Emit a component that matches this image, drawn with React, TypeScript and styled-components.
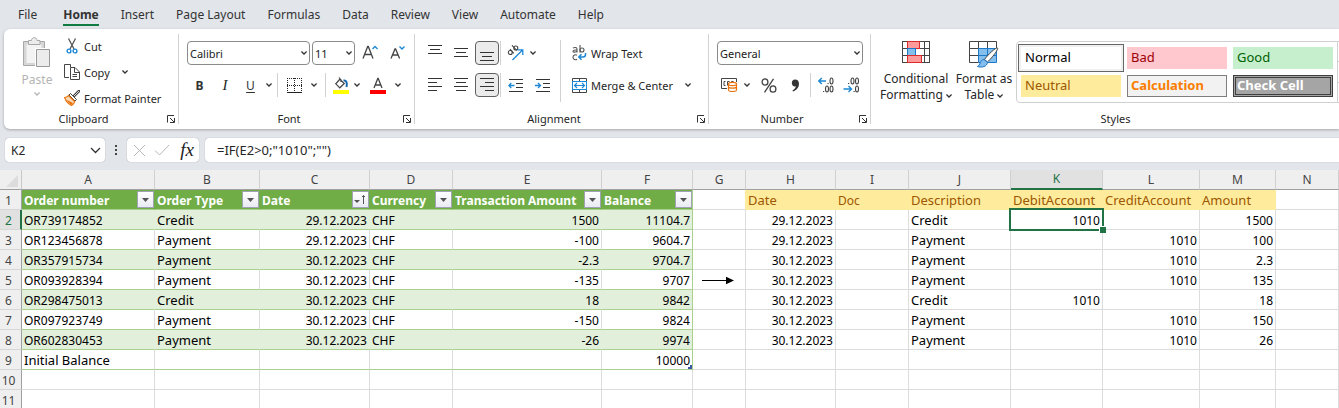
import React from "react";
import styled, { createGlobalStyle, css } from "styled-components";

const uiFont = `"Noto Sans", "Open Sans", "Liberation Sans", sans-serif`;
const green = "#217346";

const GlobalStyle = createGlobalStyle`
  *, *::before, *::after { box-sizing: border-box; }
  body { margin: 0; background: #fff; font-family: ${uiFont}; font-size: 12px; color: #262626; }
  button, input, select { font: inherit; color: inherit; margin: 0; }
`;

const Page = styled.div`
  display: flex;
  flex-direction: column;
  height: 100vh;
  overflow: hidden;
  background: #e2e5ea;
`;

/* ---------- tabs ---------- */
const Tabs = styled.nav`
  display: flex;
  flex: none;
  height: 29px;
  padding: 0 18px;
  gap: 22px;
`;
const Tab = styled.a<{ $active?: boolean }>`
  display: block;
  height: 26px;
  padding-top: 6px;
  line-height: 17px;
  text-decoration: none;
  color: #333;
  white-space: nowrap;
  ${(p) =>
    p.$active &&
    css`
      margin-left: 4px;
      font-weight: 700;
      border-bottom: 2px solid #107c41;
    `}
`;

/* ---------- ribbon ---------- */
const Ribbon = styled.section`
  display: flex;
  flex: none;
  height: 100px;
  margin-left: 4px;
  padding: 4px 0 2px;
  background: #fff;
  border-radius: 6px 0 0 6px;
  box-shadow: 0 1px 3px rgba(0, 0, 0, 0.28);
`;
const Group = styled.div<{ $width?: number }>`
  display: flex;
  flex-direction: column;
  flex: ${(p) => (p.$width ? "none" : "1 0 auto")};
  width: ${(p) => (p.$width ? `${p.$width}px` : "auto")};
  ${(p) =>
    p.$width &&
    css`
      background: linear-gradient(#d2d2d2, #d2d2d2) right 1px / 1px 90px no-repeat;
    `}
`;
const GroupBody = styled.div<{ $pad?: number; $gap?: number }>`
  display: flex;
  height: 78px;
  padding-left: ${(p) => p.$pad ?? 8}px;
  gap: ${(p) => p.$gap ?? 0}px;
`;
const GroupFooter = styled.div<{ $indent?: number }>`
  display: flex;
  align-items: center;
  height: 16px;
  padding: 0 4px 0 ${(p) => p.$indent ?? 0}px;
`;
const GroupName = styled.span`
  flex: 1;
  padding-right: 4px;
  font-size: 11px;
  line-height: 16px;
  text-align: center;
`;
const IconButton = styled.button<{ $w?: number; $pressed?: boolean }>`
  display: inline-flex;
  align-items: center;
  justify-content: center;
  flex: none;
  width: ${(p) => p.$w ?? 24}px;
  height: 24px;
  padding: 0;
  border: 1px solid ${(p) => (p.$pressed ? "#616161" : "transparent")};
  border-radius: 4px;
  background: ${(p) => (p.$pressed ? "#ebebeb" : "transparent")};
`;
const Launcher = styled(IconButton)`
  width: 8px;
  height: 16px;
  border: 0;
`;
const Stack = styled.div`
  display: flex;
  flex-direction: column;
`;
const Rows = styled(Stack)`
  padding-top: 4px;
`;
const ToolRow = styled.div<{ $gap?: number }>`
  display: flex;
  align-items: center;
  height: 32px;
  gap: ${(p) => p.$gap ?? 0}px;
`;
const Divider = styled.span<{ $space?: number }>`
  flex: none;
  width: 1px;
  height: 24px;
  margin: 0 ${(p) => p.$space ?? 0}px;
  background: #d2d2d2;
`;
const TallDivider = styled(Divider)`
  height: 62px;
  margin: 7px 10px 0 5px;
`;
const TextButton = styled.button<{ $h?: number }>`
  display: flex;
  align-items: center;
  height: ${(p) => p.$h ?? 26}px;
  padding: 0;
  gap: 4px;
  border: 0;
  background: none;
  font-size: 11px;
  white-space: nowrap;
`;
const IconSlot = styled.span`
  display: flex;
  justify-content: center;
  width: 16px;
`;
const MoreSlot = styled.span`
  display: flex;
  margin-left: 8px;
`;
const BigButton = styled.button<{ $w: number; $muted?: boolean }>`
  display: flex;
  flex-direction: column;
  align-items: center;
  width: ${(p) => p.$w}px;
  padding: ${(p) => (p.$muted ? 4 : 8)}px 0 0;
  gap: ${(p) => (p.$muted ? 4 : 2)}px;
  border: 0;
  background: none;
  color: ${(p) => (p.$muted ? "#b4b4b4" : "#262626")};
  line-height: 16px;
  white-space: nowrap;
  span svg {
    vertical-align: middle;
  }
`;
const BigIcon = styled.div`
  height: 28px;
  line-height: 0;
`;
const Drop = styled.div<{ $w: number }>`
  position: relative;
  flex: none;
  width: ${(p) => p.$w}px;
  height: 24px;
`;
const Select = styled.select`
  appearance: none;
  width: 100%;
  height: 24px;
  padding: 0 2px;
  border: 1px solid #8a8a8a;
  border-radius: 4px;
  background: #fff;
  color: #222;
  font-size: 11px;
`;
const DropMark = styled.span<{ $right?: number }>`
  position: absolute;
  top: 0;
  right: ${(p) => p.$right ?? 3}px;
  display: flex;
  align-items: center;
  height: 100%;
  pointer-events: none;
`;
const Italic = styled.i`
  font-family: "Liberation Serif", serif;
  font-size: 15px;
`;
const Glyph = styled.span<{ $bold?: boolean }>`
  font-weight: ${(p) => (p.$bold ? 700 : 400)};
  text-decoration: ${(p) => (p.$bold ? "none" : "underline")};
  text-underline-offset: 2px;
  color: #333;
`;

/* ---------- style gallery ---------- */
const Gallery = styled.div`
  display: grid;
  grid-template-columns: repeat(3, 100px);
  grid-auto-rows: 22px;
  gap: 6px;
  flex: none;
  height: 62px;
  margin: 8px 0 0 1px;
  padding: 5px 4px;
  border: 1px solid #d0d0d0;
  border-radius: 4px 0 0 4px;
`;
const Swatch = styled.button<{ $bg: string; $fg: string; $kind?: "selected" | "calc" | "check" }>`
  padding: 0 4px 2px;
  border: 0;
  background: ${(p) => p.$bg};
  color: ${(p) => p.$fg};
  font-size: 13px;
  line-height: 20px;
  text-align: left;
  ${(p) =>
    p.$kind === "selected" &&
    css`
      box-shadow: 0 0 0 2px #f0f0f0, 0 0 0 3px #666;
    `}
  ${(p) =>
    p.$kind === "calc" &&
    css`
      padding: 0 3px 2px;
      border: 1px solid #7f7f7f;
      font-weight: 700;
      line-height: 18px;
    `}
  ${(p) =>
    p.$kind === "check" &&
    css`
      padding: 0 1px 2px;
      border: 3px double #3f3f3f;
      font-weight: 700;
      line-height: 14px;
    `}
`;
const Scroller = styled.div`
  display: flex;
  flex-direction: column;
  flex: none;
  width: 18px;
  margin-top: 8px;
  height: 62px;
  border: 1px solid #d0d0d0;
  border-left: 0;
`;
const ScrollButton = styled.button`
  flex: 1;
  padding: 0;
  border: 0;
  background: none;
  & + & {
    border-top: 1px solid #d0d0d0;
  }
`;

/* ---------- formula bar ---------- */
const FormulaBar = styled.div`
  display: flex;
  align-items: center;
  flex: none;
  height: 41px;
  padding-left: 5px;
  padding-top: 1px;
`;
const NameBox = styled.div`
  position: relative;
  width: 100px;
  height: 24px;
`;
const Field = styled.input<{ $pad: number }>`
  width: 100%;
  height: 24px;
  padding: 0 ${(p) => p.$pad}px;
  border: 0;
  border-radius: 4px;
  background: #fff;
  box-shadow: 0 0 1px rgba(0, 0, 0, 0.4);
`;
const FormulaField = styled(Field)`
  flex: 1;
  border-radius: 4px 0 0 4px;
  font-size: 13px;
`;
const DotsSlot = styled.span`
  display: flex;
  justify-content: center;
  width: 22px;
`;
const FormulaTools = styled.div`
  display: flex;
  align-items: center;
  justify-content: space-between;
  width: 72px;
  height: 24px;
  margin-right: 6px;
  padding: 0 2px 0 4px;
  border-radius: 4px;
  background: #fff;
  box-shadow: 0 0 1px rgba(0, 0, 0, 0.4);
`;
const FxMark = styled.i`
  font-family: "Liberation Serif", serif;
  font-size: 19px;
  line-height: 20px;
  color: #222;
`;

/* ---------- sheet ---------- */
const SheetArea = styled.main`
  flex: 1;
  min-height: 0;
  overflow: hidden;
  background: #fff;
`;
const Sheet = styled.table`
  width: 100%;
  border-collapse: separate;
  border-spacing: 0;
  table-layout: fixed;
  font-size: 12px;
  line-height: 17px;
  color: #000;
`;
const Corner = styled.td`
  height: 20px;
  padding: 0 3px 2px 0;
  background: #efefef;
  border-right: 1px solid #c8c8c8;
  border-bottom: 1px solid #a0a0a0;
  line-height: 0;
  text-align: right;
  vertical-align: bottom;
`;
const ColHead = styled.th<{ $on?: boolean }>`
  height: 20px;
  padding: 0;
  background: ${(p) => (p.$on ? "#e1e1e1" : "#efefef")};
  border-right: 1px solid #d0d0d0;
  border-bottom: ${(p) => (p.$on ? `2px solid ${green}` : "1px solid #a0a0a0")};
  color: ${(p) => (p.$on ? green : "#444")};
  font-weight: 400;
  line-height: 18px;
`;
const RowHead = styled.th<{ $on?: boolean }>`
  height: 20px;
  padding: 2px ${(p) => (p.$on ? 3 : 4)}px 0 0;
  background: ${(p) => (p.$on ? "#e1e1e1" : "#efefef")};
  border-right: ${(p) => (p.$on ? `2px solid ${green}` : "1px solid #a0a0a0")};
  border-bottom: 1px solid #d6d6d6;
  color: ${(p) => (p.$on ? green : "#444")};
  font-weight: 400;
`;

type Zone = "plain" | "head" | "band" | "row" | "yellow";
const zoneFill: Record<Zone, string> = {
  plain: "#fff",
  head: "#70ad47",
  band: "#e2efda",
  row: "#fff",
  yellow: "#ffeb9c",
};
const Cell = styled.td<{ $zone: Zone; $right?: boolean; $wordy?: boolean; $edge?: string }>`
  position: relative;
  height: 20px;
  padding: ${(p) => (p.$zone === "head" ? 0 : 2)}px 2px 0;
  background: ${(p) => zoneFill[p.$zone]};
  border-right: 1px solid
    ${(p) => p.$edge ?? (p.$zone === "plain" || p.$zone === "row" ? "#dcdcdc" : zoneFill[p.$zone])};
  border-bottom: 1px solid
    ${(p) => (p.$zone === "plain" ? "#dcdcdc" : p.$zone === "yellow" ? "#ffeb9c" : "#a9d08e")};
  color: ${(p) => (p.$zone === "head" ? "#fff" : p.$zone === "yellow" ? "#9c5700" : "#000")};
  font-size: ${(p) => (p.$wordy ? 13 : 12)}px;
  font-weight: ${(p) => (p.$zone === "head" ? 700 : 400)};
  text-align: ${(p) => (p.$right ? "right" : "left")};
  white-space: nowrap;
`;
const HeadContent = styled.div`
  display: flex;
  align-items: center;
  justify-content: space-between;
  height: 19px;
  margin-right: -2px;
`;
const HeadText = styled.span`
  padding-top: 2px;
`;
const FilterButton = styled.button`
  display: flex;
  align-items: center;
  justify-content: center;
  flex: none;
  width: 17px;
  height: 17px;
  padding: 0;
  border: 1px solid #9fa3b3;
  background: linear-gradient(#fff, #e9ebf2);
`;
const Selection = styled.span`
  position: absolute;
  inset: -2px;
  z-index: 1;
  border: 2px solid ${green};
  &::after {
    content: "";
    position: absolute;
    right: -4px;
    bottom: -4px;
    width: 7px;
    height: 7px;
    border: solid #fff;
    border-width: 1px 0 0 1px;
    background: ${green};
  }
`;
const TableCorner = styled.span`
  position: absolute;
  right: 0;
  bottom: 0;
  width: 4px;
  height: 4px;
  background: #3f55a5;
  clip-path: polygon(50% 0, 100% 0, 100% 100%, 0 100%, 0 50%, 50% 50%);
`;
const ArrowMark = styled.svg`
  display: block;
  margin-left: 6px;
`;

/* ---------- icons ---------- */
const Chevron = ({ big, color = "#333" }: { big?: boolean; color?: string }) =>
  big ? (
    <svg width="11" height="7" viewBox="0 0 11 7" fill="none" stroke={color} strokeWidth="1.3">
      <path d="M1 1l4.5 4.5L10 1" />
    </svg>
  ) : (
    <svg width="6" height="4" viewBox="0 0 6 4" fill="none" stroke={color} strokeWidth="1.3">
      <path d="M.4.6L3 3 5.6.6" />
    </svg>
  );

const LauncherIcon = () => (
  <svg width="8" height="8" viewBox="0 0 8 8" fill="none" stroke="#333">
    <path d="M.5 7.5V.5H7M3 3l4 4M7.5 3v4.500H3" />
  </svg>
);

const PasteIcon = () => (
  <svg width="28" height="31" viewBox="0 0 28 31" fill="#ececec" stroke="#a8a8a8">
    <path d="M.5 4.500H21.500V28.500H.5Z" fill="#d6d6d6" />
    <path d="M3.500 7.500H18.500V26H3.500Z" fill="#f3f3f3" stroke="none" />
    <path d="M5.500 7.500V3.500H8.500C8.500-.3 14-.3 14 3.500H17V7.500Z" />
    <path d="M13.500 12.500H26.500V29.500H13.500Z" fill="#efefef" stroke="#fff" strokeWidth="3" />
    <path d="M13.500 12.500H26.500V29.500H13.500Z" stroke="#999" />
  </svg>
);
const CutIcon = () => (
  <svg width="12" height="16" viewBox="0 0 12 16" fill="none">
    <path d="M2.500 .5L8 11M9.500.5L4 11" stroke="#555" strokeWidth="1.3" />
    <circle cx="3" cy="13" r="1.900" stroke="#1e88d6" strokeWidth="1.4" />
    <circle cx="9" cy="13" r="1.900" stroke="#1e88d6" strokeWidth="1.4" />
  </svg>
);
const CopyIcon = () => (
  <svg width="16" height="16" viewBox="0 0 16 16" fill="#fff" stroke="#444">
    <path d="M5 13.500H.5V.5H6.500V3" />
    <path d="M6.500 3.500H11L15.500 8V15.500H6.500Z" />
    <path d="M10.500 3.500V8.500H15M8.500 10.500H13M8.500 12.500H13" fill="none" />
  </svg>
);
const PainterIcon = () => (
  <svg width="16" height="16" viewBox="0 0 16 16" fill="none">
    <path d="M15 1L10 6" stroke="#444" strokeWidth="2.600" strokeLinecap="round" />
    <path d="M15 1L10 6" stroke="#fff" strokeWidth=".8" />
    <path d="M6.500 3.500L12.500 9.500L11 11L5 5Z" fill="#fff" stroke="#444" />
    <path d="M4.500 5.500C3.500 7 2 7.500.5 7.500C2 11.500 4 14 7.500 15.500C9 14.500 10.500 13 10.700 11.500Z" fill="#fbd9b5" stroke="#e8720c" strokeWidth="1.200" />
    <path d="M2 9.500L9 13L7 15Z" fill="#e8720c" />
  </svg>
);
const GrowFont = ({ down }: { down?: boolean }) => (
  <svg width="17" height="16" viewBox="0 0 17 16" fill="none">
    {down ? (
      <>
        <path d="M1 13.500L5 4H5.600L9.600 13.500M2.600 10H8" stroke="#444" strokeWidth="1.300" />
        <path d="M9.500 1.500L12 4L14.500 1.500" stroke="#1e88d6" strokeWidth="1.400" />
      </>
    ) : (
      <>
        <path d="M1 13.500L5.700 1.500H6.300L11 13.500M2.800 9.500H9.200" stroke="#444" strokeWidth="1.300" />
        <path d="M10.500 4L13 1.500L15.500 4" stroke="#1e88d6" strokeWidth="1.400" />
      </>
    )}
  </svg>
);
const BordersIcon = () => (
  <svg width="15" height="15" viewBox="0 0 15 15" stroke="#222" fill="none">
    <path d="M0 .5H15M0 7.500H15M.5 0V13M7.500 0V13M14.500 0V13" strokeDasharray="1 1" />
    <path d="M0 14.500H15" />
  </svg>
);
const FillIcon = () => (
  <svg width="16" height="17" viewBox="0 0 16 17" fill="none">
    <path d="M7.500 1.500L2.800 6.800L6.800 10.800L11.300 6.500L6.500 2M6 .5L8 3V5" stroke="#444" strokeWidth="1.200" />
    <path d="M10.500 3.500C13.500 3 14.500 6 13.500 10" stroke="#1668b0" strokeWidth="2" />
    <path d="M0 13H16V17H0Z" fill="#ff0" />
  </svg>
);
const FontColorIcon = () => (
  <svg width="16" height="17" viewBox="0 0 16 17" fill="none">
    <path d="M4 11L7.800 1.500H8.200L12 11M5.300 8H10.700" stroke="#444" strokeWidth="1.300" />
    <path d="M0 13H16V17H0Z" fill="#f00" />
  </svg>
);
const LinesIcon = ({ d, h = 14 }: { d: string; h?: number }) => (
  <svg width="14" height={h} viewBox={`0 0 14 ${h}`} fill="none" stroke="#333" shapeRendering="crispEdges">
    <path d={d} />
  </svg>
);
const OrientIcon = () => (
  <svg width="17" height="16" viewBox="0 0 17 16" fill="none">
    <g stroke="#444" strokeWidth="1.100">
      <circle cx="3.300" cy="7.500" r="2" />
      <path d="M3 4L6.800 8.400" />
      <path d="M5 .3L9.800 5.500" />
      <circle cx="8.800" cy="3" r="2" />
    </g>
    <path d="M5.500 15L15.500 5M10.500 4.800H15.800V10" stroke="#1e88d6" strokeWidth="1.300" />
  </svg>
);
const IndentIcon = ({ more }: { more?: boolean }) => (
  <svg width="15" height="13" viewBox="0 0 15 13" fill="none">
    <path d="M1 .5H15M8 4.500H15M8 8.500H15M1 12.500H15" stroke="#333" />
    <path d={more ? "M0 6.500H5.500M3 4L5.500 6.500L3 9" : "M6.500 6.500H.8M3.300 4L.8 6.500L3.300 9"} stroke="#1e88d6" strokeWidth="1.300" />
  </svg>
);
const WrapIcon = () => (
  <svg width="15" height="16" viewBox="0 0 15 16" fill="none">
    <g stroke="#555" strokeWidth="1.100">
      <path d="M1 3.200C2 2.200 5 2 5 4V7.500M5 5C3 4.800 1 5.200 1 6.300S4 7.500 5 6" />
      <path d="M8 0V7.500" />
      <circle cx="10" cy="5" r="2" />
      <path d="M5 10.200C3.500 9.300 1 10 1 12.300S3.500 15.300 5 14.300" />
    </g>
    <path d="M13.500 8V9.500C13.500 11 12.500 12 11 12H7M9.500 9.200L6.800 12L9.500 14.800" stroke="#1e88d6" strokeWidth="1.500" />
  </svg>
);
const MergeIcon = () => (
  <svg width="15" height="15" viewBox="0 0 15 15" fill="none">
    <path d="M.5 .5H14.500V14.500H.5ZM7.500 .5V3M7.500 12V14.500" stroke="#444" />
    <path d="M.5 3.500H14.500V11.500H.5Z" fill="#fff" stroke="#1e88d6" />
    <path d="M2.500 7.500H12.500M5 5L2.500 7.500L5 10M10 5L12.500 7.500L10 10" stroke="#1e88d6" strokeWidth="1.200" />
  </svg>
);
const CurrencyIcon = () => (
  <svg width="17" height="14" viewBox="0 0 17 14" fill="none">
    <path d="M6 10.500H.5V.5H15.500V4" stroke="#444" />
    <path d="M4.500 3.500H3V7.500H4.500M8.500 3.500H6.500V7.500M10.500 4V3.500H12.500" stroke="#444" />
    <path d="M7.500 6V12C7.500 14 15.500 14 15.500 12V6" fill="#fff" stroke="#e8720c" strokeWidth="1.200" />
    <ellipse cx="11.500" cy="6" rx="4" ry="1.600" fill="#fff" stroke="#e8720c" strokeWidth="1.200" />
    <path d="M7.500 9C8 10.600 15 10.600 15.500 9" stroke="#e8720c" strokeWidth="1.200" />
  </svg>
);
const PercentIcon = () => (
  <svg width="16" height="15" viewBox="0 0 16 15" fill="none" stroke="#444" strokeWidth="1.300">
    <ellipse cx="4" cy="4" rx="2.900" ry="3.200" />
    <ellipse cx="12" cy="11" rx="2.900" ry="3.200" />
    <path d="M12.500.8L3.500 14.300" />
  </svg>
);
const CommaIcon = () => (
  <svg width="9" height="13" viewBox="0 0 9 13" fill="#333">
    <path d="M4 .5C6.500.5 8 2 8 4.800C8 8.500 5.500 11.500 2 12.500L1.500 11.500C3.500 10.500 4.700 9 4.700 7.300C2.500 7.800.8 6.200.8 4C.8 2 2.200.5 4 .5Z" />
  </svg>
);
const DecimalIcon = ({ less }: { less?: boolean }) => (
  <svg width="17" height="16" viewBox="0 0 17 16" fill="none" stroke="#444" strokeWidth="1.100">
    <ellipse cx={less ? 9.5 : 13.5} cy="4" rx="1.500" ry="3" />
    {less && <ellipse cx="14" cy="4" rx="1.500" ry="3" />}
    {!less && <ellipse cx="9" cy="12" rx="1.500" ry="3" />}
    <ellipse cx={less ? 14 : 13.5} cy="12" rx="1.500" ry="3" />
    <path d={less ? "M5 6.500H6.200M10.500 14.500H11.700" : "M9.500 6.500H10.700M5 14.500H6.200"} />
    <path
      d={less ? "M.5 12H8.500M5.500 9L8.500 12L5.500 15" : "M8 4H.8M3.800 1L.8 4L3.800 7"}
      stroke="#1e88d6"
      strokeWidth="1.400"
    />
  </svg>
);
const ConditionalIcon = () => (
  <svg width="28" height="22" viewBox="0 0 28 22" fill="none" shapeRendering="crispEdges">
    <path d="M.5 .5H27.500V21.500H.5ZM.5 7.500H27.500M.5 14.500H27.500M5.500 .5V21.500M22.500 .5V21.500" stroke="#444" />
    <path d="M5.500 .5H17.500V7.500H5.500Z" fill="#ff9a9a" stroke="#d92b2b" />
    <path d="M5.500 7.500H13.500V14.500H5.500Z" fill="#83beec" stroke="#1e78c8" />
    <path d="M5.500 14.500H19.500V21.500H5.500Z" fill="#ff9a9a" stroke="#d92b2b" />
  </svg>
);
const FormatTableIcon = () => (
  <svg width="30" height="27" viewBox="0 0 30 27" fill="none">
    <path d="M9.500 7.500H27.500V21.500H9.500Z" fill="#83beec" />
    <path d="M.5 .5H27.500V7.500H.5ZM.5 7.500V21.500H9.500M.5 14.500H9.500M9.500 .5V7.500M18.500 .5V7.500" stroke="#444" />
    <path d="M9.500 7.500H27.500V21.500H9.500ZM9.500 14.500H27.500M18.500 7.500V21.500" stroke="#1e78c8" />
    <path d="M28.500 7C30 8 22 18 18.500 21L15.500 18.500C18 14.500 27 6 28.500 7Z" fill="#fff" stroke="#444" />
    <path d="M15 18.500L18.500 21.500C18 25.500 13 27 8.500 25.500C11.500 24.500 10.500 19 15 18.500Z" fill="#83beec" stroke="#1e78c8" />
  </svg>
);
const DotsIcon = () => (
  <svg width="3" height="11" viewBox="0 0 3 11" fill="#444">
    <path d="M0 0H2V2H0ZM0 4H2V6H0ZM0 8H2V10H0Z" />
  </svg>
);

/* ---------- data ---------- */
const tabs = ["File", "Home", "Insert", "Page Layout", "Formulas", "Data", "Review", "View", "Automate", "Help"];

const columns: [string, number | undefined][] = [
  ["A", 133], ["B", 105], ["C", 110], ["D", 83], ["E", 149], ["F", 91], ["G", 53],
  ["H", 90], ["I", 73], ["J", 102], ["K", 92], ["L", 97], ["M", 76], ["N", undefined],
];
const sheetRows: string[][] = [
  ["Order number", "Order Type", "Date", "Currency", "Transaction Amount", "Balance", "", "Date", "Doc", "Description", "DebitAccount", "CreditAccount", "Amount", ""],
  ["OR739174852", "Credit", "29.12.2023", "CHF", "1500", "11104.7", "", "29.12.2023", "", "Credit", "1010", "", "1500", ""],
  ["OR123456878", "Payment", "29.12.2023", "CHF", "-100", "9604.7", "", "29.12.2023", "", "Payment", "", "1010", "100", ""],
  ["OR357915734", "Payment", "30.12.2023", "CHF", "-2.3", "9704.7", "", "30.12.2023", "", "Payment", "", "1010", "2.3", ""],
  ["OR093928394", "Payment", "30.12.2023", "CHF", "-135", "9707", "", "30.12.2023", "", "Payment", "", "1010", "135", ""],
  ["OR298475013", "Credit", "30.12.2023", "CHF", "18", "9842", "", "30.12.2023", "", "Credit", "1010", "", "18", ""],
  ["OR097923749", "Payment", "30.12.2023", "CHF", "-150", "9824", "", "30.12.2023", "", "Payment", "", "1010", "150", ""],
  ["OR602830453", "Payment", "30.12.2023", "CHF", "-26", "9974", "", "30.12.2023", "", "Payment", "", "1010", "26", ""],
  ["Initial Balance", "", "", "", "", "10000", "", "", "", "", "", "", "", ""],
  Array(14).fill(""),
  Array(14).fill(""),
];
const rightAligned = new Set([2, 4, 5, 7, 10, 11, 12]);

const zoneOf = (r: number, c: number): Zone => {
  if (c < 6 && r === 0) return "head";
  if (c < 6 && r < 9) return r % 2 ? "band" : "row";
  if (c > 6 && c < 13 && r === 0) return "yellow";
  return "plain";
};
const edgeOf = (r: number, c: number) => {
  if (c === 5 && r < 9) return "#a9d08e";
  if (c === 6 && r === 0) return "#ffeb9c";
  return undefined;
};

const SheetCell = ({ r, c, text }: { r: number; c: number; text: string }) => {
  const zone = zoneOf(r, c);
  const wordy = zone !== "head" && text.length > 3 && !/\d/.test(text);
  return (
    <Cell $zone={zone} $wordy={wordy} $right={r > 0 && rightAligned.has(c)} $edge={edgeOf(r, c)}>
      {zone === "head" ? (
        <HeadContent>
          <HeadText>{text}</HeadText>
          <FilterButton aria-label={`Filter ${text}`}>
            {c === 2 ? (
              <svg width="13" height="11" viewBox="0 0 13 11" fill="#555">
                <path d="M0 6H6L3 9Z" />
                <path d="M9.500 10V1.500M8 3L9.500 1.500L11 3" stroke="#555" fill="none" />
              </svg>
            ) : (
              <svg width="7" height="4" viewBox="0 0 7 4" fill="#555">
                <path d="M0 0H7L3.500 4Z" />
              </svg>
            )}
          </FilterButton>
        </HeadContent>
      ) : (
        text
      )}
      {r === 1 && c === 10 && <Selection />}
      {r === 8 && c === 5 && <TableCorner />}
      {r === 4 && c === 6 && (
        <ArrowMark width="34" height="9" viewBox="0 0 34 9">
          <path d="M1 4.500H26" stroke="#000" />
          <path d="M25 .8L33 4.500L25 8.200Z" />
        </ArrowMark>
      )}
    </Cell>
  );
};

export default function App() {
  return (
    <Page>
      <GlobalStyle />
      <Tabs>
        {tabs.map((t) => (
          <Tab key={t} href="#" $active={t === "Home"}>
            {t}
          </Tab>
        ))}
      </Tabs>

      <Ribbon>
        <Group $width={175}>
          <GroupBody $pad={14} $gap={8}>
            <BigButton $w={38} $muted>
              <PasteIcon />
              <span>Paste</span>
              <Chevron color="#b4b4b4" />
            </BigButton>
            <Stack>
              <TextButton>
                <IconSlot><CutIcon /></IconSlot>Cut
              </TextButton>
              <TextButton>
                <IconSlot><CopyIcon /></IconSlot>Copy
                <MoreSlot><Chevron /></MoreSlot>
              </TextButton>
              <TextButton>
                <IconSlot><PainterIcon /></IconSlot>Format Painter
              </TextButton>
            </Stack>
          </GroupBody>
          <GroupFooter>
            <GroupName>Clipboard</GroupName>
            <Launcher aria-label="Clipboard options"><LauncherIcon /></Launcher>
          </GroupFooter>
        </Group>

        <Group $width={236}>
          <GroupBody>
            <Rows>
              <ToolRow $gap={2}>
                <Drop $w={123}>
                  <Select aria-label="Font"><option>Calibri</option></Select>
                  <DropMark><Chevron /></DropMark>
                </Drop>
                <Drop $w={43}>
                  <Select aria-label="Font size"><option>11</option></Select>
                  <DropMark><Chevron /></DropMark>
                </Drop>
                <IconButton $w={26} aria-label="Increase font size"><GrowFont /></IconButton>
                <IconButton $w={26} aria-label="Decrease font size"><GrowFont down /></IconButton>
              </ToolRow>
              <ToolRow>
                <IconButton $w={25} aria-label="Bold"><Glyph $bold>B</Glyph></IconButton>
                <IconButton $w={26} aria-label="Italic"><Italic>I</Italic></IconButton>
                <IconButton $w={25} aria-label="Underline"><Glyph>U</Glyph></IconButton>
                <IconButton $w={12} aria-label="Underline styles"><Chevron /></IconButton>
                <Divider $space={2} />
                <IconButton $w={28} aria-label="Borders"><BordersIcon /></IconButton>
                <IconButton $w={12} aria-label="Border styles"><Chevron /></IconButton>
                <Divider $space={5} />
                <IconButton $w={20} aria-label="Fill color"><FillIcon /></IconButton>
                <IconButton $w={12} aria-label="Fill colors"><Chevron /></IconButton>
                <IconButton $w={30} aria-label="Font color"><FontColorIcon /></IconButton>
                <IconButton $w={10} aria-label="Font colors"><Chevron /></IconButton>
              </ToolRow>
            </Rows>
          </GroupBody>
          <GroupFooter>
            <GroupName>Font</GroupName>
            <Launcher aria-label="Font options"><LauncherIcon /></Launcher>
          </GroupFooter>
        </Group>

        <Group $width={294}>
          <GroupBody>
            <Rows>
              <ToolRow $gap={1}>
                <IconButton aria-label="Top align"><LinesIcon d="M0 2.500H14M2 6.500H12M0 10.500H14" h={20} /></IconButton>
                <IconButton $w={26} aria-label="Middle align"><LinesIcon d="M0 1.500H14M2 5.500H12M0 9.500H14" h={12} /></IconButton>
                <IconButton $pressed aria-label="Bottom align"><LinesIcon d="M0 9.500H14M2 13.500H12M0 17.500H14" h={20} /></IconButton>
                <Divider />
                <IconButton $w={26} aria-label="Orientation"><OrientIcon /></IconButton>
                <IconButton $w={8} aria-label="Orientation options"><Chevron /></IconButton>
              </ToolRow>
              <ToolRow $gap={1}>
                <IconButton aria-label="Align left"><LinesIcon d="M0 .5H14M0 4.500H9M0 8.500H14M0 12.500H9" /></IconButton>
                <IconButton $w={26} aria-label="Center"><LinesIcon d="M0 .5H14M2 4.500H12M0 8.500H14M2 12.500H12" /></IconButton>
                <IconButton $pressed aria-label="Align right"><LinesIcon d="M0 .5H14M5 4.500H14M0 8.500H14M5 12.500H14" /></IconButton>
                <Divider />
                <IconButton $w={26} aria-label="Decrease indent"><IndentIcon /></IconButton>
                <IconButton $w={26} aria-label="Increase indent"><IndentIcon more /></IconButton>
              </ToolRow>
            </Rows>
            <TallDivider />
            <Rows>
              <TextButton $h={32}>
                <IconSlot><WrapIcon /></IconSlot>Wrap Text
              </TextButton>
              <TextButton $h={32}>
                <IconSlot><MergeIcon /></IconSlot>Merge &amp; Center
                <MoreSlot><Chevron /></MoreSlot>
              </TextButton>
            </Rows>
          </GroupBody>
          <GroupFooter>
            <GroupName>Alignment</GroupName>
            <Launcher aria-label="Alignment options"><LauncherIcon /></Launcher>
          </GroupFooter>
        </Group>

        <Group $width={162}>
          <GroupBody>
            <Rows>
              <ToolRow>
                <Drop $w={146}>
                  <Select aria-label="Number format"><option>General</option></Select>
                  <DropMark><Chevron /></DropMark>
                </Drop>
              </ToolRow>
              <ToolRow>
                <IconButton aria-label="Accounting format"><CurrencyIcon /></IconButton>
                <IconButton $w={12} aria-label="Accounting formats"><Chevron /></IconButton>
                <IconButton $w={32} aria-label="Percent style"><PercentIcon /></IconButton>
                <IconButton $w={20} aria-label="Comma style"><CommaIcon /></IconButton>
                <Divider $space={5} />
                <IconButton $w={20} aria-label="Increase decimal"><DecimalIcon /></IconButton>
                <IconButton $w={30} aria-label="Decrease decimal"><DecimalIcon less /></IconButton>
              </ToolRow>
            </Rows>
          </GroupBody>
          <GroupFooter>
            <GroupName>Number</GroupName>
            <Launcher aria-label="Number options"><LauncherIcon /></Launcher>
          </GroupFooter>
        </Group>

        <Group>
          <GroupBody>
            <BigButton $w={74}>
              <BigIcon><ConditionalIcon /></BigIcon>
              <span>Conditional<br />Formatting <Chevron /></span>
            </BigButton>
            <BigButton $w={62}>
              <BigIcon><FormatTableIcon /></BigIcon>
              <span>Format as<br />Table <Chevron /></span>
            </BigButton>
            <Gallery>
              <Swatch $bg="#fff" $fg="#000" $kind="selected">Normal</Swatch>
              <Swatch $bg="#ffc7ce" $fg="#9c0006">Bad</Swatch>
              <Swatch $bg="#c6efce" $fg="#006100">Good</Swatch>
              <Swatch $bg="#ffeb9c" $fg="#9c5700">Neutral</Swatch>
              <Swatch $bg="#f2f2f2" $fg="#fa7d00" $kind="calc">Calculation</Swatch>
              <Swatch $bg="#a5a5a5" $fg="#fff" $kind="check">Check Cell</Swatch>
            </Gallery>
            <Scroller>
              <ScrollButton aria-label="Previous styles" />
              <ScrollButton aria-label="Next styles" />
              <ScrollButton aria-label="More styles" />
            </Scroller>
          </GroupBody>
          <GroupFooter $indent={12}>
            <GroupName>Styles</GroupName>
          </GroupFooter>
        </Group>
      </Ribbon>

      <FormulaBar>
        <NameBox>
          <Field $pad={6} aria-label="Name box" defaultValue="K2" />
          <DropMark $right={4}><Chevron big /></DropMark>
        </NameBox>
        <DotsSlot><DotsIcon /></DotsSlot>
        <FormulaTools>
          <IconButton $w={16} aria-label="Cancel">
            <svg width="13" height="13" viewBox="0 0 13 13" stroke="#b8b8b8" fill="none"><path d="M1 1l11 11M12 1L1 12" /></svg>
          </IconButton>
          <IconButton $w={18} aria-label="Enter">
            <svg width="16" height="12" viewBox="0 0 16 12" stroke="#b8b8b8" fill="none"><path d="M1 6.500L5.500 11L15 1" /></svg>
          </IconButton>
          <IconButton $w={20} aria-label="Insert function"><FxMark>fx</FxMark></IconButton>
        </FormulaTools>
        <FormulaField $pad={12} aria-label="Formula" defaultValue={'=IF(E2>0;"1010";"")'} />
      </FormulaBar>

      <SheetArea>
        <Sheet>
          <colgroup>
            <col width={22} />
            {columns.map(([name, w]) => (
              <col key={name} width={w} />
            ))}
          </colgroup>
          <thead>
            <tr>
              <Corner>
                <svg width="12" height="12" viewBox="0 0 12 12" fill="#dcdcdc"><path d="M12 0V12H0Z" /></svg>
              </Corner>
              {columns.map(([name]) => (
                <ColHead key={name} scope="col" $on={name === "K"}>{name}</ColHead>
              ))}
            </tr>
          </thead>
          <tbody>
            {sheetRows.map((cells, r) => (
              <tr key={r}>
                <RowHead scope="row" $on={r === 1}>{r + 1}</RowHead>
                {cells.map((text, c) => (
                  <SheetCell key={c} r={r} c={c} text={text} />
                ))}
              </tr>
            ))}
          </tbody>
        </Sheet>
      </SheetArea>
    </Page>
  );
}
